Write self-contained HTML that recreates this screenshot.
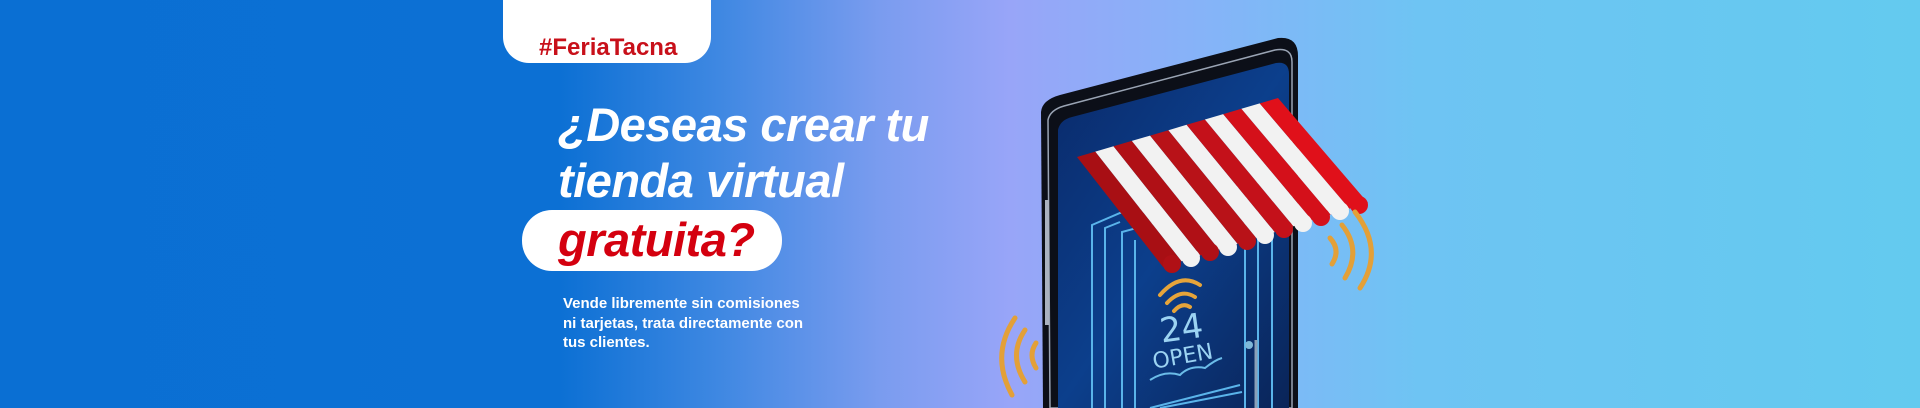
<!DOCTYPE html>
<html><head><meta charset="utf-8"><style>
html,body{margin:0;padding:0}
body{width:1920px;height:408px;overflow:hidden;position:relative;font-family:"Liberation Sans",sans-serif;
background:linear-gradient(90deg,#0a6fd3 0px,#0c70d4 560px,#3f88e2 720px,#7a9cef 880px,#98a5f8 1010px,#86b3f8 1200px,#6ec4f3 1420px,#63caef 1920px);}
.tag{position:absolute;left:503px;top:-30px;width:208px;height:93px;background:#fff;border-radius:26px;}
.tag span{position:absolute;left:36px;top:64px;font-weight:bold;font-size:24px;color:#c8101a;}
.h{position:absolute;left:558px;color:#fff;font-weight:bold;font-style:italic;font-size:47px;letter-spacing:-0.5px;white-space:nowrap}
.pill{position:absolute;left:522px;top:210px;width:260px;height:61px;background:#fff;border-radius:30px;}
.pill span{position:absolute;left:36px;top:2px;color:#d4000f;font-weight:bold;font-style:italic;font-size:47px;letter-spacing:-0.5px}
.p{position:absolute;left:563px;top:294px;color:#fff;font-weight:bold;font-size:15px;line-height:19.5px}
svg{position:absolute;left:0;top:0}
</style></head><body>
<div class="tag"><span>#FeriaTacna</span></div>
<div class="h" style="top:97px">¿Deseas crear tu</div>
<div class="h" style="top:153px">tienda virtual</div>
<div class="pill"><span>gratuita?</span></div>
<div class="p">Vende libremente sin comisiones<br>ni tarjetas, trata directamente con<br>tus clientes.</div>
<svg width="1920" height="408" viewBox="0 0 1920 408">
<defs>
<linearGradient id="scr" x1="0" y1="0" x2="1" y2="1"><stop offset="0" stop-color="#0a2a6a"/><stop offset="0.5" stop-color="#0c3f8c"/><stop offset="1" stop-color="#0a2458"/></linearGradient>
</defs>
<path d="M1041,112 Q1042,100 1060,95 L1278,38 Q1298,36 1298,56 L1298,408 L1043,408 Z" fill="#0c0f18"/>
<path d="M1048,120 Q1050,110 1064,106 L1275,50 Q1292,47 1292,62 L1292,408 L1050,408 Z" fill="none" stroke="#9aa4b4" stroke-width="1.5"/>
<path d="M1058,130 Q1060,120 1072,117 L1276,63 Q1289,61 1289,74 L1289,408 L1058,408 Z" fill="url(#scr)"/>
<rect x="1045" y="200" width="4" height="125" fill="#aab2c0"/>
<g fill="none" stroke="#5ab4ea" stroke-width="2">
<path d="M1092,408 L1092,225 L1120,213 L1270,180"/>
<path d="M1105,408 L1105,228 L1120,222"/>
<path d="M1122,408 L1122,232 L1258,195"/>
<path d="M1135,408 L1135,240"/>
<path d="M1245,408 L1245,205"/>
<path d="M1258,408 L1258,196"/>
<path d="M1272,408 L1272,180"/>
<path d="M1150,408 L1240,385 M1160,408 L1242,392"/>
</g>
<line x1="1256" y1="340" x2="1256" y2="408" stroke="#8aa0b8" stroke-width="3"/>
<circle cx="1249" cy="345" r="4" fill="#7fb8d8"/>
<g fill="none" stroke="#e6a43a" stroke-width="4" stroke-linecap="round">
<path d="M1160,295 Q1180,272 1200,285"/>
<path d="M1167,303 Q1181,288 1195,297"/>
<path d="M1174,311 Q1182,302 1190,307"/>
</g>
<text x="1160" y="340" font-family="DejaVu Sans,sans-serif" font-size="34" fill="#9cd3f2" transform="rotate(-8 1180 330)">24</text>
<text x="1152" y="364" font-family="DejaVu Sans,sans-serif" font-size="22" fill="#9cd3f2" transform="rotate(-10 1180 355)">OPEN</text>
<path d="M1150,380 Q1165,370 1180,375 Q1190,365 1205,368 Q1215,360 1222,358" fill="none" stroke="#6bbce8" stroke-width="2"/>
<g>
<polygon points="1077,157 1095.3,151.6 1181.6,261.2 1163,267" fill="#a80f14"/>
<polygon points="1095.3,151.6 1113.5,146.3 1200.3,255.4 1181.6,261.2" fill="#f2f2f2"/>
<polygon points="1113.5,146.3 1131.8,140.9 1218.9,249.5 1200.3,255.4" fill="#b01016"/>
<polygon points="1131.8,140.9 1150.1,135.6 1237.5,243.7 1218.9,249.5" fill="#f2f2f2"/>
<polygon points="1150.1,135.6 1168.4,130.2 1256.2,237.9 1237.5,243.7" fill="#b81218"/>
<polygon points="1168.4,130.2 1186.6,124.8 1274.8,232.1 1256.2,237.9" fill="#f2f2f2"/>
<polygon points="1186.6,124.8 1204.9,119.5 1293.4,226.3 1274.8,232.1" fill="#c4111a"/>
<polygon points="1204.9,119.5 1223.2,114.1 1312.1,220.4 1293.4,226.3" fill="#f2f2f2"/>
<polygon points="1223.2,114.1 1241.4,108.8 1330.7,214.6 1312.1,220.4" fill="#d4101a"/>
<polygon points="1241.4,108.8 1259.7,103.4 1349.4,208.8 1330.7,214.6" fill="#f2f2f2"/>
<polygon points="1259.7,103.4 1278,98 1368,203 1349.4,208.8" fill="#e0101a"/>
<circle cx="1172" cy="264" r="9" fill="#b01016"/>
<circle cx="1191" cy="258" r="9" fill="#f2f2f2"/>
<circle cx="1210" cy="252" r="9" fill="#b01016"/>
<circle cx="1228" cy="247" r="9" fill="#f2f2f2"/>
<circle cx="1247" cy="241" r="9" fill="#b81218"/>
<circle cx="1265" cy="235" r="9" fill="#f2f2f2"/>
<circle cx="1284" cy="229" r="9" fill="#c4111a"/>
<circle cx="1303" cy="223" r="9" fill="#f2f2f2"/>
<circle cx="1321" cy="217" r="9" fill="#d4101a"/>
<circle cx="1340" cy="211" r="9" fill="#f2f2f2"/>
<circle cx="1359" cy="205" r="9" fill="#e0101a"/>
</g>
<g fill="none" stroke="#e3a038" stroke-width="5" stroke-linecap="round">
<path d="M1015,318 Q990,355 1012,395"/>
<path d="M1025,330 Q1008,355 1025,382"/>
<path d="M1036,343 Q1028,355 1036,368"/>
<path d="M1355,212 Q1385,250 1360,288"/>
<path d="M1342,225 Q1362,250 1345,278"/>
<path d="M1330,238 Q1341,250 1332,264"/>
</g>
</svg>
</body></html>
